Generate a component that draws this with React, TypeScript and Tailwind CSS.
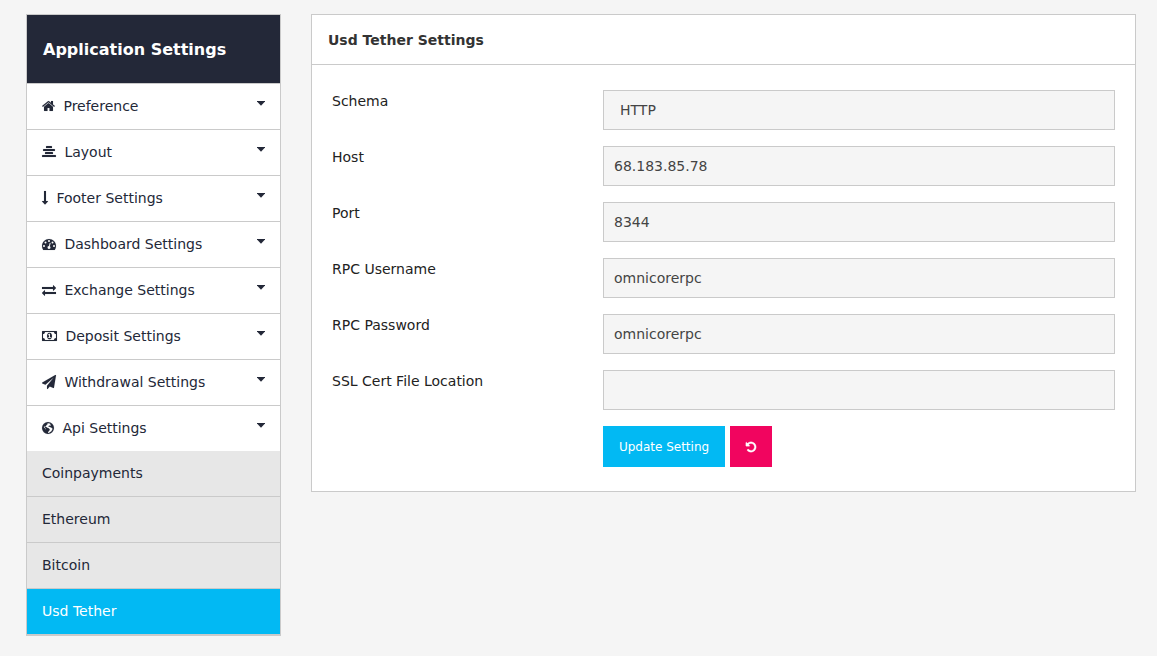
import React from "react";

type Glyph = { w: number; shape: React.ReactNode };

const glyphs: Record<string, Glyph> = {
  home: {
    w: 13,
    shape: (
      <path transform="translate(-64 0)" d="M1472 992v480q0 26-19 45t-45 19h-384v-384h-256v384h-384q-26 0-45-19t-19-45v-480q0-1 .5-3t.5-3l575-474 575 474q1 2 1 6zm223-69l-62 74q-8 9-21 11h-3q-13 0-21-7l-692-577-692 577q-12 8-24 7-13-2-21-11l-62-74q-8-10-7-23.5t11-21.5l719-599q32-26 76-26t76 26l244 204v-195q0-14 9-23t23-9h192q14 0 23 9t9 23v408l219 182q10 8 11 21.5t-7 23.5z" />
    ),
  },
  layout: {
    w: 14,
    shape: (
      <>
        <rect x="512" y="136" width="768" height="240" rx="30" />
        <rect x="136" y="520" width="1520" height="240" rx="30" />
        <rect x="384" y="904" width="1024" height="240" rx="30" />
        <rect x="8" y="1288" width="1776" height="240" rx="30" />
      </>
    ),
  },
  arrow: {
    w: 6,
    shape: (
      <path d="M765 1299q8 19-5 35l-350 384q-10 10-23 10-14 0-24-10l-355-384q-13-16-5-35 9-19 29-19h224v-1248q0-14 9-23t23-9h192q14 0 23 9t9 23v1248h224q21 0 29 19z" />
    ),
  },
  gauge: {
    w: 14,
    shape: (
      <path d="M384 1152q0-53-37.5-90.5t-90.5-37.5-90.5 37.5-37.5 90.5 37.5 90.5 90.5 37.5 90.5-37.5 37.5-90.5zm192-448q0-53-37.5-90.5t-90.5-37.5-90.5 37.5-37.5 90.5 37.5 90.5 90.5 37.5 90.5-37.5 37.5-90.5zm428 481l101-382q6-26-7.5-48.5t-38.5-29.5-48 6.5-30 39.5l-101 382q-60 5-107 43.5t-63 98.5q-20 77 20 146t117 89 146-20 89-117q16-60-6-117t-72-91zm660-33q0-53-37.5-90.5t-90.5-37.5-90.5 37.5-37.5 90.5 37.5 90.5 90.5 37.5 90.5-37.5 37.5-90.5zm-640-640q0-53-37.5-90.5t-90.5-37.5-90.5 37.5-37.5 90.5 37.5 90.5 90.5 37.5 90.5-37.5 37.5-90.5zm448 192q0-53-37.5-90.5t-90.5-37.5-90.5 37.5-37.5 90.5 37.5 90.5 90.5 37.5 90.5-37.5 37.5-90.5zm320 448q0 261-141 483-19 29-54 29h-1402q-35 0-54-29-141-221-141-483 0-182 71-348t191-286 286-191 348-71 348 71 286 191 191 286 71 348z" />
    ),
  },
  exchange: {
    w: 14,
    shape: (
      <path d="M1792 1184v192q0 13-9.5 22.5t-22.5 9.5h-1376v192q0 13-9.5 22.5t-22.5 9.5q-12 0-24-10l-319-320q-9-9-9-22 0-14 9-23l320-320q9-9 23-9 13 0 22.5 9.5t9.5 22.5v192h1376q13 0 22.5 9.5t9.5 22.5zm0-544q0 14-9 23l-320 320q-9 9-23 9-13 0-22.5-9.5t-9.5-22.5v-192h-1376q-13 0-22.5-9.5t-9.5-22.5v-192q0-13 9.5-22.5t22.5-9.5h1376v-192q0-14 9-23t23-9q12 0 24 10l319 319q9 9 9 23z" />
    ),
  },
  money: {
    w: 15,
    shape: (
      <path fillRule="evenodd" d="M768 1152h384v-96h-128v-448h-114l-148 137 77 80q42-37 55-57h2v288h-128v96zm512-256q0 70-21 142t-59.5 134-101.5 101-138 39-138-39-101.5-101-59.5-134-21-142 21-142 59.5-134 101.5-101 138-39 138 39 101.5 101 59.5 134 21 142zm512 256v-512q-106 0-181-75t-75-181h-1152q0 106-75 181t-181 75v512q106 0 181 75t75 181h1152q0-106 75-181t181-75zm128-832v1152q0 26-19 45t-45 19h-1792q-26 0-45-19t-19-45v-1152q0-26 19-45t45-19h1792q26 0 45 19t19 45z" />
    ),
  },
  plane: {
    w: 14,
    shape: (
      <path d="M1764 11q33 24 27 64l-256 1536q-5 29-32 45-14 8-31 8-11 0-24-5l-453-185-242 295q-18 23-49 23-13 0-22-4-19-7-30.5-23.5t-11.5-36.5v-349l864-1059-1069 925-395-162q-37-14-40-55-2-40 32-59l1664-960q15-9 32-9 20 0 36 11z" />
    ),
  },
  globe: {
    w: 12,
    shape: (
      <path fillRule="evenodd" d="M768 128a768 768 0 1 1 0 1536a768 768 0 1 1 0-1536zM1060 350l-190-70-200 50 40 90-130 80-50 120-110 70 30 90 120-20 90 110 150 40 190 150-70 190-130 130-40 150 120-10 320-220 140-230-30-180-190-60-130-100-110 30-50-110 130-80 110 60 60-130-90-90zM300 620l-70 150 60 120 100 50 80 120 60 60-70-180-110-130z" />
    ),
  },
};

function Icon({ name }: { name: string }) {
  const g = glyphs[name];
  return (
    <svg
      width={g.w}
      height={14}
      viewBox={`0 0 ${g.w * 128} 1792`}
      className="shrink-0 overflow-visible fill-current stroke-current [stroke-width:12px]"
      aria-hidden="true"
    >
      {g.shape}
    </svg>
  );
}

const menu = [
  ["home", "Preference"],
  ["layout", "Layout"],
  ["arrow", "Footer Settings"],
  ["gauge", "Dashboard Settings"],
  ["exchange", "Exchange Settings"],
  ["money", "Deposit Settings"],
  ["plane", "Withdrawal Settings"],
  ["globe", "Api Settings"],
];

const fields = [
  ["Host", "68.183.85.78"],
  ["Port", "8344"],
  ["RPC Username", "omnicorerpc"],
  ["RPC Password", "omnicorerpc"],
  ["SSL Cert File Location", ""],
];

const control = "h-10 w-[512px] border border-[#cacaca] bg-[#f5f5f5] text-sm text-[#444] outline-none";

export default function App() {
  return (
    <div className="flex min-h-screen items-start gap-[30px] bg-[#f5f5f5] pt-3.5 pl-[26px] font-['DejaVu_Sans',sans-serif] text-sm text-[#222]">
      <aside className="w-[255px] border border-[#cacaca] bg-white text-[#232838]">
        <h1 className="flex h-[68px] items-center bg-[#232838] pt-0.5 pl-4 text-base font-bold text-white">
          Application Settings
        </h1>
        <nav>
          {menu.map(([icon, label]) => (
            <a key={label} className="flex h-[46px] items-center border-t border-[#cacaca] px-[15px] pb-px">
              <Icon name={icon} />
              <span className="ml-[8.45px] grow">{label}</span>
              <svg width="8" height="5" viewBox="0 0 8 5" className="mb-[5px] fill-current" aria-hidden="true">
                <path d="M0 0h8v.4L4 4.7 0 .4z" />
              </svg>
            </a>
          ))}
          <div className="border-b border-[#cacaca]">
            {["Coinpayments", "Ethereum", "Bitcoin"].map((label) => (
              <a key={label} className="flex h-[46px] items-center border-b border-[#cacaca] bg-[#e7e7e7] pb-0.5 pl-[15px]">
                {label}
              </a>
            ))}
            <a className="flex h-[45px] items-center bg-[#02b9f3] pb-px pl-[15px] text-white">Usd Tether</a>
          </div>
        </nav>
      </aside>

      <main className="h-[478px] w-[825px] border border-[#cacaca] bg-white">
        <h2 className="flex h-[50px] items-center border-b border-[#cacaca] pl-4 font-bold text-[#333]">
          Usd Tether Settings
        </h2>
        <form className="flex flex-col gap-4 pt-[25px] pl-5">
          <div className="flex">
            <label className="w-[271px] pt-px">Schema</label>
            <div className={`${control} flex items-center pl-4`}>HTTP</div>
          </div>
          {fields.map(([label, value]) => (
            <div key={label} className="flex">
              <label className="w-[271px] pt-px">{label}</label>
              <input className={`${control} px-2.5`} defaultValue={value} />
            </div>
          ))}
          <div className="flex gap-[5px] pl-[271px] text-xs text-white">
            <button type="button" className="h-[41px] w-[122px] bg-[#02b9f3]">Update Setting</button>
            <button type="button" aria-label="Reset" className="flex h-[41px] w-[42px] items-center justify-center bg-[#f1055f]">
              <svg width="12" height="12" viewBox="0 0 1792 1792" className="fill-current stroke-current [stroke-width:50px]" aria-hidden="true">
                <path d="M1664 896q0 156-61 298t-164 245-245 164-298 61q-172 0-327-72.5t-264-204.5q-7-10-6.5-22.5t8.5-20.5l137-138q10-9 25-9 16 2 23 12 73 95 179 147t225 52q104 0 198.5-40.5t163.5-109.5 109.5-163.5 40.5-198.5-40.5-198.5-109.5-163.5-163.5-109.5-198.5-40.5q-98 0-188 35.5t-160 101.5l137 138q31 30 14 69-17 40-59 40h-448q-26 0-45-19t-19-45v-448q0-42 40-59 39-17 69 14l130 129q107-101 244.5-156.5t284.5-55.5q156 0 298 61t245 164 164 245 61 298z" />
              </svg>
            </button>
          </div>
        </form>
      </main>
    </div>
  );
}
